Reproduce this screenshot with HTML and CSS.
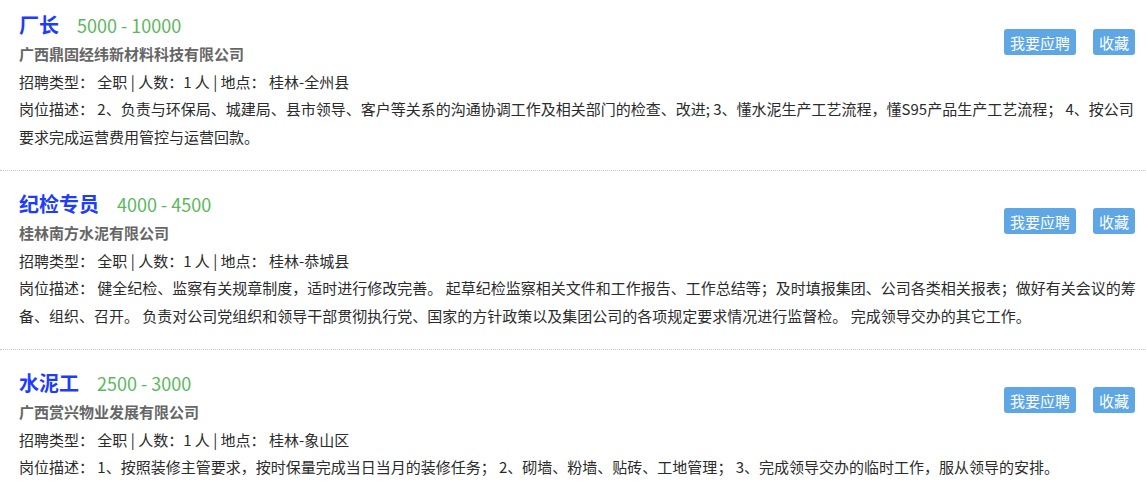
FILE: index.html
```html
<!DOCTYPE html>
<html lang="zh-CN">
<head>
    <meta charset="UTF-8">
    <meta name="viewport" content="width=device-width, initial-scale=1.0">
    <title>招聘信息</title>
    <link rel="stylesheet" href="styles.css">
</head>
<body>
    <div class="job-list">
        <div class="job">
            <div class="actions">
                <button>我要应聘</button>
                <button>收藏</button>
            </div>
            <h3><span class="job-name">厂长</span><span class="salary">5000 - 10000</span></h3>
            <p class="company">广西鼎固经纬新材料科技有限公司</p>
            <p class="meta">招聘类型： 全职 | 人数：1 人 | 地点： 桂林-全州县</p>
            <p class="desc">岗位描述： 2、负责与环保局、城建局、县市领导、客户等关系的沟通协调工作及相关部门的检查、改进; 3、懂水泥生产工艺流程，懂S95产品生产工艺流程； 4、按公司要求完成运营费用管控与运营回款。</p>
        </div>

        <div class="job">
            <div class="actions">
                <button>我要应聘</button>
                <button>收藏</button>
            </div>
            <h3><span class="job-name">纪检专员</span><span class="salary">4000 - 4500</span></h3>
            <p class="company">桂林南方水泥有限公司</p>
            <p class="meta">招聘类型： 全职 | 人数：1 人 | 地点： 桂林-恭城县</p>
            <p class="desc">岗位描述： 健全纪检、监察有关规章制度，适时进行修改完善。 起草纪检监察相关文件和工作报告、工作总结等；及时填报集团、公司各类相关报表；做好有关会议的筹备、组织、召开。 负责对公司党组织和领导干部贯彻执行党、国家的方针政策以及集团公司的各项规定要求情况进行监督检。 完成领导交办的其它工作。</p>
        </div>

        <div class="job">
            <div class="actions">
                <button>我要应聘</button>
                <button>收藏</button>
            </div>
            <h3><span class="job-name">水泥工</span><span class="salary">2500 - 3000</span></h3>
            <p class="company">广西赏兴物业发展有限公司</p>
            <p class="meta">招聘类型： 全职 | 人数：1 人 | 地点： 桂林-象山区</p>
            <p class="desc">岗位描述： 1、按照装修主管要求，按时保量完成当日当月的装修任务； 2、砌墙、粉墙、贴砖、工地管理； 3、完成领导交办的临时工作，服从领导的安排。</p>
        </div>
    </div>
</body>
</html>
```

FILE: styles.css
```css
* {
    margin: 0;
    padding: 0;
    box-sizing: border-box;
    font-family: "Noto Sans CJK SC", "Noto Sans", sans-serif;
}

body {
    background: #fff;
    color: #2b2b2b;
    font-size: 15px;
}

.job-list {
    margin-top: -8px;
}

.job {
    padding: 18px 9px 19px 19px;
    border-bottom: 1px dotted #c8c8c8;
}

h3 {
    height: 30px;
    font-size: 20px;
    line-height: 30px;
    overflow: hidden;
}

.job-name {
    font-weight: bold;
    color: #1d3cfb;
    margin-right: 18px;
}

.salary {
    font-size: 18px;
    font-weight: normal;
    color: #5cb85c;
}

.company {
    font-weight: bold;
    color: #666;
    line-height: 28px;
}

.meta {
    line-height: 27px;
}

.desc {
    line-height: 28px;
}

.actions {
    float: right;
    display: flex;
    gap: 17px;
    margin: 19px 2px 0 8px;
}

.actions button {
    background: #5ea7e4;
    color: #fff;
    border: none;
    border-radius: 3px;
    height: 26px;
    padding: 0 6px;
    font-size: 15px;
    cursor: pointer;
}
```
